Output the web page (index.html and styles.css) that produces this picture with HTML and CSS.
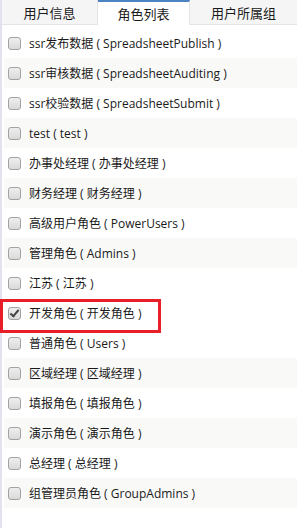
FILE: index.html
```html
<!DOCTYPE html>
<html lang="zh-CN">
<head>
<meta charset="UTF-8">
<title>角色列表</title>
<link rel="stylesheet" href="styles.css">
</head>
<body>
<div class="panel">
    <div class="tabs">
        <div class="tab">用户信息</div>
        <div class="tab active">角色列表</div>
        <div class="tab">用户所属组</div>
    </div>

    <ul class="role-list">
        <li><span class="box"></span>ssr发布数据 ( SpreadsheetPublish )</li>
        <li><span class="box"></span>ssr审核数据 ( SpreadsheetAuditing )</li>
        <li><span class="box"></span>ssr校验数据 ( SpreadsheetSubmit )</li>
        <li><span class="box"></span>test ( test )</li>
        <li><span class="box"></span>办事处经理 ( 办事处经理 )</li>
        <li><span class="box"></span>财务经理 ( 财务经理 )</li>
        <li><span class="box"></span>高级用户角色 ( PowerUsers )</li>
        <li><span class="box"></span>管理角色 ( Admins )</li>
        <li><span class="box"></span>江苏 ( 江苏 )</li>
        <li class="marked"><span class="box checked"></span>开发角色 ( 开发角色 )</li>
        <li><span class="box"></span>普通角色 ( Users )</li>
        <li><span class="box"></span>区域经理 ( 区域经理 )</li>
        <li><span class="box"></span>填报角色 ( 填报角色 )</li>
        <li><span class="box"></span>演示角色 ( 演示角色 )</li>
        <li><span class="box"></span>总经理 ( 总经理 )</li>
        <li><span class="box"></span>组管理员角色 ( GroupAdmins )</li>
    </ul>
</div>
</body>
</html>
```

FILE: styles.css
```css
body {
    margin: 0;
    padding: 0;
    font-family: "Open Sans", "Noto Sans CJK SC", sans-serif;
    font-size: 12px;
    color: #1a1a1a;
    background-color: #fff;
}
.panel {
    border-left: 2px solid #e2e2ee;
    height: 528px;
    box-sizing: border-box;
}
.tabs {
    display: flex;
    height: 25px;
    border-bottom: 1px solid #e4e4e4;
    box-sizing: border-box;
}
.tab {
    width: 96px;
    display: flex;
    align-items: center;
    justify-content: center;
    background-color: #f5f5f5;
    border-right: 1px solid #e4e4e4;
    box-sizing: border-box;
    font-size: 13px;
}
.tab:last-child {
    flex: 1;
    border-right: none;
}
.tab.active {
    width: 92px;
    background-color: #fff;
    border-top: 2px solid #4a82c4;
    height: 25px;
    padding-bottom: 1px;
}
.role-list {
    list-style: none;
    margin: 0;
    padding: 3px 0 0 2px;
}
.role-list li {
    position: relative;
    height: 30px;
    display: flex;
    align-items: center;
    padding-left: 4px;
    white-space: nowrap;
}
.role-list li:nth-child(even) {
    background-color: #f9f9f8;
}
.box {
    width: 11px;
    height: 11px;
    border: 1px solid #a2a2a2;
    border-radius: 3px;
    background: linear-gradient(#eeeeee, #dadada);
    margin-right: 8px;
    position: relative;
    flex: none;
}
.box.checked::after {
    content: "";
    position: absolute;
    left: 3px;
    top: 0px;
    width: 3px;
    height: 7px;
    border: solid #444;
    border-width: 0 2.5px 2.5px 0;
    transform: rotate(40deg);
}
.role-list li.marked {
    background-color: #fff;
}
.role-list li.marked::before {
    content: "";
    position: absolute;
    left: -4px;
    top: 1px;
    width: 161px;
    height: 34px;
    border: 3px solid #e81f28;
    box-sizing: border-box;
    pointer-events: none;
}
```
